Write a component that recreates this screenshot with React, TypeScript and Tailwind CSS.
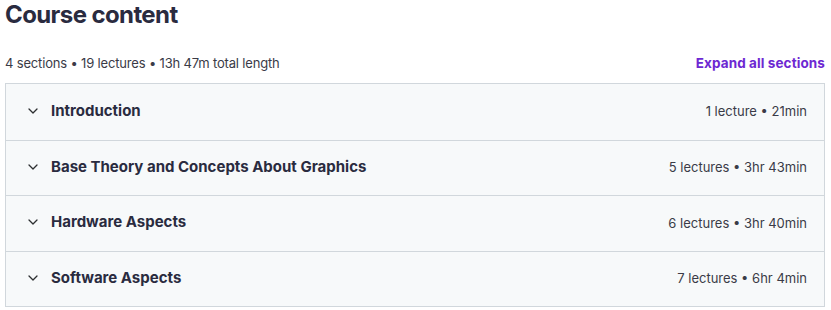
const SECTIONS = [
  { title: "Introduction", meta: "1 lecture • 21min" },
  { title: "Base Theory and Concepts About Graphics", meta: "5 lectures • 3hr 43min" },
  { title: "Hardware Aspects", meta: "6 lectures • 3hr 40min" },
  { title: "Software Aspects", meta: "7 lectures • 6hr 4min" },
];

function Chevron() {
  return (
    <svg width="10" height="6" viewBox="0 0 10 6" fill="none" className="shrink-0">
      <path d="M1 1l4 4 4-4" stroke="#2d2f31" strokeWidth="1.3" strokeLinecap="round" strokeLinejoin="round" />
    </svg>
  );
}

export default function App() {
  return (
    <div className="w-[831px] h-[310px] bg-white text-[#2d2f31] font-['Inter',sans-serif] pl-[5px] pr-[6px]">
      <h2 className="text-[24px] font-bold leading-[29px] tracking-[-0.6px] text-[#2a2b3f]">Course content</h2>

      <div className="flex items-center justify-between mt-[25px] h-[19px]">
        <span className="text-[13px] tracking-[-0.17px] text-[#3a3b47]">4 sections • 19 lectures • 13h 47m total length</span>
        <button className="text-[13.5px] font-bold tracking-[0.1px] text-[#6d28d2]">Expand all sections</button>
      </div>

      <div className="mt-[10px] border border-[#d1d7dc] bg-[#f7f9fa]">
        {SECTIONS.map((s, i) => (
          <div
            key={s.title}
            className={`flex items-center justify-between h-[55.5px] pl-[22px] pr-[17px] ${i > 0 ? "border-t border-[#d1d7dc]" : ""}`}
          >
            <div className="flex items-center gap-[13px] -mt-[2px]">
              <Chevron />
              <span className="text-[15px] font-bold text-[#2a2b3f]">{s.title}</span>
            </div>
            <span className="text-[13px] text-[#3a3b47]">{s.meta}</span>
          </div>
        ))}
      </div>
    </div>
  );
}
